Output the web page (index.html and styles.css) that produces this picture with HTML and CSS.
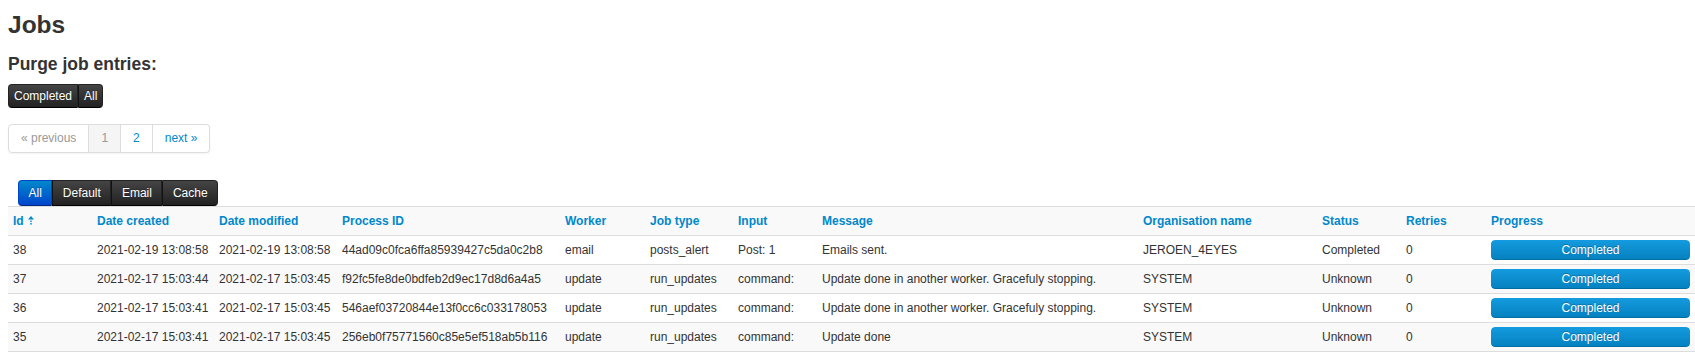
FILE: index.html
```html
<!DOCTYPE html>
<html lang="en">
<head>
  <meta charset="UTF-8">
  <title>Jobs</title>
  <link rel="stylesheet" href="styles.css">
</head>
<body>
  <div class="page">
    <h3>Jobs</h3>
    <h4>Purge job entries:</h4>
    <div class="btn-group">
      <button class="btn btn-inverse">Completed</button>
      <button class="btn btn-inverse">All</button>
    </div>

    <ul class="pagination">
      <li class="disabled"><span>&laquo; previous</span></li>
      <li class="active"><span>1</span></li>
      <li><a href="#">2</a></li>
      <li><a href="#">next &raquo;</a></li>
    </ul>
  </div>

  <div class="tabs">
    <button class="btn btn-primary">All</button>
    <button class="btn btn-inverse">Default</button>
    <button class="btn btn-inverse">Email</button>
    <button class="btn btn-inverse">Cache</button>
  </div>

  <div class="page">
    <table class="jobs">
      <colgroup>
        <col style="width:84px">
        <col style="width:122px">
        <col style="width:123px">
        <col style="width:223px">
        <col style="width:85px">
        <col style="width:88px">
        <col style="width:84px">
        <col style="width:321px">
        <col style="width:179px">
        <col style="width:84px">
        <col style="width:85px">
        <col>
      </colgroup>
      <thead>
        <tr>
          <th><a href="#">Id <svg class="sort" width="6" height="9" viewBox="0 0 6 9"><path d="M3 0 L6 3.5 L0 3.5 Z" fill="#0088cc"/><rect x="2.3" y="4.5" width="1.4" height="1.6" fill="#0088cc"/><rect x="2.3" y="7" width="1.4" height="1.6" fill="#0088cc"/></svg></a></th>
          <th><a href="#">Date created</a></th>
          <th><a href="#">Date modified</a></th>
          <th><a href="#">Process ID</a></th>
          <th><a href="#">Worker</a></th>
          <th><a href="#">Job type</a></th>
          <th><a href="#">Input</a></th>
          <th><a href="#">Message</a></th>
          <th><a href="#">Organisation name</a></th>
          <th><a href="#">Status</a></th>
          <th><a href="#">Retries</a></th>
          <th><a href="#">Progress</a></th>
        </tr>
      </thead>
      <tbody>
        <tr>
          <td>38</td>
          <td>2021-02-19 13:08:58</td>
          <td>2021-02-19 13:08:58</td>
          <td>44ad09c0fca6ffa85939427c5da0c2b8</td>
          <td>email</td>
          <td>posts_alert</td>
          <td>Post: 1</td>
          <td>Emails sent.</td>
          <td>JEROEN_4EYES</td>
          <td>Completed</td>
          <td>0</td>
          <td class="progress-cell"><div class="progress"><div class="bar" style="width:100%">Completed</div></div></td>
        </tr>
        <tr>
          <td>37</td>
          <td>2021-02-17 15:03:44</td>
          <td>2021-02-17 15:03:45</td>
          <td>f92fc5fe8de0bdfeb2d9ec17d8d6a4a5</td>
          <td>update</td>
          <td>run_updates</td>
          <td>command:</td>
          <td>Update done in another worker. Gracefuly stopping.</td>
          <td>SYSTEM</td>
          <td>Unknown</td>
          <td>0</td>
          <td class="progress-cell"><div class="progress"><div class="bar" style="width:100%">Completed</div></div></td>
        </tr>
        <tr>
          <td>36</td>
          <td>2021-02-17 15:03:41</td>
          <td>2021-02-17 15:03:45</td>
          <td>546aef03720844e13f0cc6c033178053</td>
          <td>update</td>
          <td>run_updates</td>
          <td>command:</td>
          <td>Update done in another worker. Gracefuly stopping.</td>
          <td>SYSTEM</td>
          <td>Unknown</td>
          <td>0</td>
          <td class="progress-cell"><div class="progress"><div class="bar" style="width:100%">Completed</div></div></td>
        </tr>
        <tr>
          <td>35</td>
          <td>2021-02-17 15:03:41</td>
          <td>2021-02-17 15:03:45</td>
          <td>256eb0f75771560c85e5ef518ab5b116</td>
          <td>update</td>
          <td>run_updates</td>
          <td>command:</td>
          <td>Update done</td>
          <td>SYSTEM</td>
          <td>Unknown</td>
          <td>0</td>
          <td class="progress-cell"><div class="progress"><div class="bar" style="width:100%">Completed</div></div></td>
        </tr>
      </tbody>
    </table>
  </div>
</body>
</html>
```

FILE: styles.css
```css
body {
  font-family: "Liberation Sans", Arial, sans-serif;
  font-size: 12px;
  line-height: 18px;
  color: #333;
  background: #fff;
  margin: 0;
  overflow: hidden;
}
a {
  color: #0088cc;
  text-decoration: none;
}
.page {
  padding-left: 8px;
}
h3 {
  font-size: 24.5px;
  line-height: 30px;
  font-weight: bold;
  color: #333;
  margin: 10px 0 0;
}
h4 {
  font-size: 17.5px;
  line-height: 20px;
  font-weight: bold;
  color: #333;
  margin: 14px 0 0;
}
.btn {
  font-family: inherit;
  font-size: 12px;
  line-height: 18px;
  padding: 2px 5px;
  border: 1px solid #222;
  color: #fff;
  text-shadow: 0 -1px 0 rgba(0,0,0,0.25);
  margin: 0;
  cursor: pointer;
}
.btn-inverse {
  background: linear-gradient(to bottom, #444, #222);
  border-color: #222 #222 #000;
}
.btn-primary {
  background: linear-gradient(to bottom, #0088cc, #0044cc);
  border-color: #0044cc #0044cc #002a80;
}
.btn-group {
  display: flex;
  margin-top: 10px;
}
.btn-group .btn + .btn,
.tabs .btn + .btn {
  border-left: 1px solid #111;
}
.btn-group .btn:first-child,
.tabs .btn:first-child {
  border-radius: 4px 0 0 4px;
}
.btn-group .btn:last-child,
.tabs .btn:last-child {
  border-radius: 0 4px 4px 0;
}
.pagination {
  display: inline-flex;
  list-style: none;
  padding: 0;
  margin: 16px 0 0;
  border-radius: 4px;
  box-shadow: 0 1px 2px rgba(0,0,0,0.05);
}
.pagination li a,
.pagination li span {
  display: block;
  padding: 4px 12px;
  line-height: 19px;
  border: 1px solid #ddd;
  border-left-width: 0;
  background: #fff;
}
.pagination li:first-child span {
  border-left-width: 1px;
  border-radius: 4px 0 0 4px;
}
.pagination li:last-child a {
  border-radius: 0 4px 4px 0;
}
.pagination .disabled span {
  color: #999;
}
.pagination .active span {
  color: #999;
  background: #f5f5f5;
}
.tabs {
  display: flex;
  margin: 27px 0 0 18px;
}
.tabs .btn {
  padding: 3px 9.5px;
}
.jobs {
  width: 100%;
  table-layout: fixed;
  border-collapse: collapse;
}
.jobs th,
.jobs td {
  text-align: left;
  padding: 5px 5px;
  line-height: 18px;
  border-top: 1px solid #ddd;
  white-space: nowrap;
  overflow: hidden;
}
.jobs tbody tr:last-child td {
  border-bottom: 1px solid #ddd;
}
.jobs thead th {
  background: #f9f9f9;
  border-top: 1px solid #ddd;
  font-weight: bold;
}
.jobs tbody tr:nth-child(even) td {
  background: #f9f9f9;
}
.sort {
  vertical-align: 0;
  margin-left: 1px;
}
.jobs td.progress-cell {
  padding: 4px 5px;
}
.progress {
  height: 20px;
  border-radius: 4px;
  background: #f5f5f5;
  overflow: hidden;
}
.bar {
  height: 20px;
  line-height: 20px;
  text-align: center;
  color: #fff;
  text-shadow: 0 -1px 0 rgba(0,0,0,0.25);
  background: linear-gradient(to bottom, #149bdf, #0480be);
  box-shadow: inset 0 -1px 0 rgba(0,0,0,0.15);
  border-radius: 4px;
}
```
